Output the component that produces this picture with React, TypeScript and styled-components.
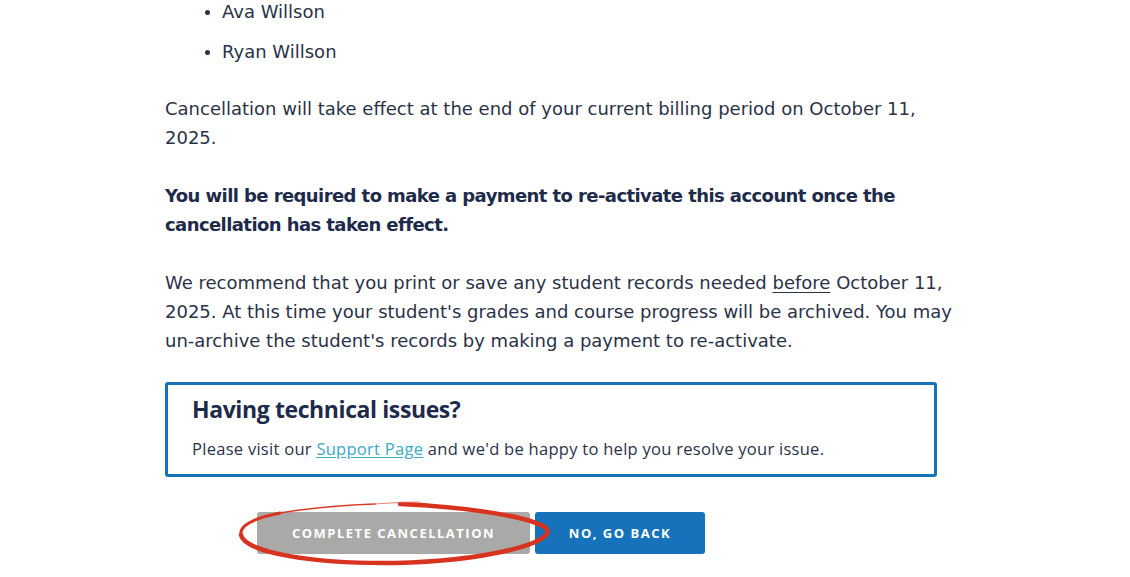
import styled, { createGlobalStyle } from "styled-components";

const GlobalStyle = createGlobalStyle`
  html, body {
    margin: 0;
    padding: 0;
    background: #ffffff;
  }
  body {
    font-family: "DejaVu Sans", "Open Sans", sans-serif;
    color: #2a3247;
    overflow: hidden;
  }
`;

const Page = styled.main`
  width: 1130px;
  height: 577px;
  overflow: hidden;
`;

const Content = styled.section`
  width: 790px;
  margin: -3px 0 0 165px;
  font-size: 18px;
  line-height: 29px;
`;

const NameList = styled.ul`
  margin: 0 0 28px;
  padding: 0 0 0 57px;
  list-style: none;
`;

const NameItem = styled.li`
  position: relative;
  margin-bottom: 11px;

  &:last-child {
    margin-bottom: 0;
  }

  &::before {
    content: "";
    position: absolute;
    left: -17px;
    top: 13px;
    width: 5px;
    height: 5px;
    border-radius: 50%;
    background: #2a3247;
  }
`;

const Paragraph = styled.p<{ $strong?: boolean }>`
  margin: 0 0 29px;
  font-weight: ${(p) => (p.$strong ? 700 : 400)};
  letter-spacing: ${(p) => (p.$strong ? "-0.58px" : "0")};
  color: ${(p) => (p.$strong ? "#1e2a4a" : "#2a3247")};

  &:last-of-type {
    margin-bottom: 27px;
  }
`;

const Underlined = styled.span`
  text-decoration: underline;
  text-underline-offset: 3px;
`;

const HelpBox = styled.div`
  width: 772px;
  box-sizing: border-box;
  border: 3px solid #1872b8;
  border-radius: 3px;
  padding: 10px 24px 14px;
  font-family: "Open Sans", "Liberation Sans", sans-serif;
`;

const HelpTitle = styled.h3`
  margin: 0 0 15px;
  font-size: 23px;
  line-height: 28px;
  font-weight: 700;
  letter-spacing: -0.4px;
  color: #1e2a4a;
`;

const HelpText = styled.p`
  margin: 0;
  font-size: 16.5px;
  line-height: 22px;
  letter-spacing: 0.28px;
  color: #2a3247;
`;

const SupportLink = styled.a`
  color: #3aa9c6;
  text-decoration: underline;
  text-underline-offset: 2px;
`;

const Actions = styled.div`
  position: relative;
  display: flex;
  gap: 5px;
  margin: 35px 0 0 92px;
`;

const ActionButton = styled.button<{ $variant: "muted" | "primary" }>`
  height: 42px;
  border: none;
  border-radius: 3px;
  padding: 0;
  width: ${(p) => (p.$variant === "muted" ? "273px" : "170px")};
  background: ${(p) => (p.$variant === "muted" ? "#a9a9a8" : "#1672ba")};
  color: #ffffff;
  font-family: "Open Sans", "Liberation Sans", sans-serif;
  font-size: 13px;
  font-weight: 700;
  letter-spacing: 1.5px;
  text-transform: uppercase;
  cursor: pointer;
`;

const Scribble = styled.svg`
  position: absolute;
  left: -22px;
  top: -17px;
  pointer-events: none;
`;

export default function App() {
  return (
    <Page>
      <GlobalStyle />
      <Content>
        <NameList>
          <NameItem>Ava Willson</NameItem>
          <NameItem>Ryan Willson</NameItem>
        </NameList>

        <Paragraph>
          Cancellation will take effect at the end of your current billing period on October 11,
          2025.
        </Paragraph>

        <Paragraph $strong>
          You will be required to make a payment to re-activate this account once the
          cancellation has taken effect.
        </Paragraph>

        <Paragraph>
          We recommend that you print or save any student records needed <Underlined>before</Underlined>{" "}
          October 11, 2025. At this time your student's grades and course progress will be archived.
          You may un-archive the student's records by making a payment to re-activate.
        </Paragraph>

        <HelpBox>
          <HelpTitle>Having technical issues?</HelpTitle>
          <HelpText>
            Please visit our <SupportLink href="#">Support Page</SupportLink> and we'd be happy to
            help you resolve your issue.
          </HelpText>
        </HelpBox>

        <Actions>
          <ActionButton $variant="muted">Complete Cancellation</ActionButton>
          <ActionButton $variant="primary">No, Go Back</ActionButton>
          <Scribble width="320" height="75" viewBox="0 0 320 75">
            <path
              d="M165 9 C 232 12, 300 22, 312 34 C 320 48, 250 66, 160 68 C 80 69, 10 58, 6 40"
              fill="none"
              stroke="#d8331f"
              strokeWidth="4.5"
              strokeLinecap="round"
            />
            <path
              d="M6 40 C 4 30, 20 23, 45 18"
              fill="none"
              stroke="#d8331f"
              strokeWidth="3"
              strokeLinecap="round"
            />
            <path
              d="M45 18 C 80 12, 110 10, 140 9"
              fill="none"
              stroke="#dc3b25"
              strokeWidth="1.6"
              strokeLinecap="round"
            />
            <path
              d="M140 9 C 155 8, 170 7, 185 7"
              fill="none"
              stroke="#e4604d"
              strokeWidth="0.8"
              strokeLinecap="round"
            />
          </Scribble>
        </Actions>
      </Content>
    </Page>
  );
}
